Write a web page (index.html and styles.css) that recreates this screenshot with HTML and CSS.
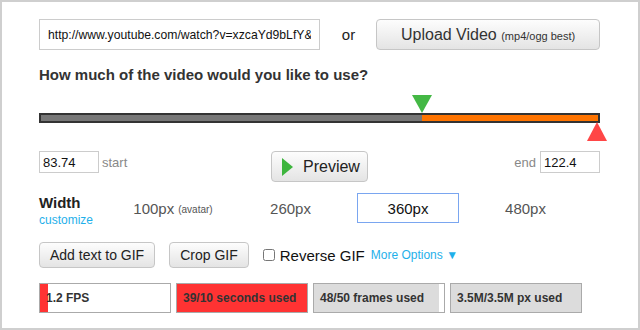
FILE: index.html
```html
<!DOCTYPE html>
<html>
<head>
<meta charset="utf-8">
<link rel="stylesheet" href="styles.css">
</head>
<body>
<div class="frame">
  <div class="source">
    <input class="url" type="text" value="http://www.youtube.com/watch?v=xzcaYd9bLfY&amp;list=PL">
    <span class="or">or</span>
    <button class="btn upload">Upload Video <small>(mp4/ogg best)</small></button>
  </div>

  <h2 class="question">How much of the video would you like to use?</h2>

  <div class="slider">
    <div class="track">
      <div class="played" style="width:381px"></div>
    </div>
    <span class="handle handle-start"></span>
    <span class="handle handle-end"></span>
  </div>

  <div class="range">
    <div class="range-start">
      <input class="num" type="text" value="83.74">
      <span class="muted muted-start">start</span>
    </div>
    <button class="btn preview">
      <svg class="play" width="11" height="18" viewBox="0 0 11 18"><polygon points="0,0 11,9 0,18" fill="#3db53d"/></svg>
      <span>Preview</span>
    </button>
    <div class="range-end">
      <span class="muted muted-end">end</span>
      <input class="num" type="text" value="122.4">
    </div>
  </div>

  <div class="widths">
    <div class="width-label">
      <span class="width-title">Width</span>
      <span class="customize">customize</span>
    </div>
    <div class="opt">100px<small>(avatar)</small></div>
    <div class="opt">260px</div>
    <div class="opt selected">360px</div>
    <div class="opt">480px</div>
  </div>

  <div class="actions">
    <button class="btn act">Add text to GIF</button>
    <button class="btn act">Crop GIF</button>
    <label class="reverse"><input type="checkbox" class="check">Reverse GIF</label>
    <span class="more">More Options ▼</span>
  </div>

  <div class="stats">
    <div class="stat stat-red" style="--p:6%">1.2 FPS</div>
    <div class="stat stat-red" style="--p:100%">39/10 seconds used</div>
    <div class="stat stat-gray" style="--p:96%">48/50 frames used</div>
    <div class="stat stat-gray" style="--p:100%">3.5M/3.5M px used</div>
  </div>
</div>
</body>
</html>
```

FILE: styles.css
```css
body {
  margin: 0;
  font-family: "Liberation Sans", Arial, sans-serif;
  background: #fff;
}

.frame {
  width: 640px;
  height: 330px;
  box-sizing: border-box;
  border: 2px solid #cfcfcf;
  padding: 17px 38px 0 37px;
}

.btn {
  box-sizing: border-box;
  margin: 0;
  padding: 0;
  border: 1px solid #c6c6c6;
  border-radius: 4px;
  background: linear-gradient(#fdfdfd, #e4e4e4);
  font-family: "Liberation Sans", Arial, sans-serif;
  color: #222;
  cursor: pointer;
}

/* row 1 */
.source {
  display: flex;
  align-items: center;
  height: 31px;
}

.url {
  width: 281px;
  height: 31px;
  box-sizing: border-box;
  margin: 0;
  border: 1px solid #cccccc;
  padding: 0 8px;
  font-family: "Liberation Sans", Arial, sans-serif;
  font-size: 12.2px;
  color: #111;
  outline: none;
}

.or {
  margin: 0 21px 0 22px;
  font-size: 15px;
  color: #222;
}

.upload {
  width: 224px;
  height: 31px;
  font-size: 16px;
  color: #333;
}

.upload small {
  font-size: 11px;
}

/* heading */
.question {
  margin: 16px 0 0;
  font-size: 15px;
  line-height: 18px;
  font-weight: bold;
  color: #333;
}

/* slider */
.slider {
  position: relative;
  height: 46px;
  box-sizing: border-box;
  padding-top: 18px;
  margin-top: 11px;
}

.track {
  display: flex;
  height: 10px;
  box-sizing: border-box;
  border: 2px solid #333;
  background: #ff7400;
}

.played {
  height: 100%;
  background: #777;
}

.handle {
  position: absolute;
  width: 0;
  height: 0;
  border-left: 10px solid transparent;
  border-right: 10px solid transparent;
}

.handle-start {
  top: 0;
  left: 373px;
  border-top: 18px solid #44b845;
}

.handle-end {
  top: 27px;
  left: 548px;
  border-bottom: 19px solid #ff4646;
}

/* range row */
.range {
  display: grid;
  grid-template-columns: 1fr auto 1fr;
  align-items: start;
  margin-top: 10px;
  height: 31px;
}

.range-start,
.range-end {
  display: flex;
  align-items: center;
  height: 22px;
}

.range-end {
  justify-self: end;
}

.num {
  width: 60px;
  height: 22px;
  box-sizing: border-box;
  margin: 0;
  border: 1px solid #cccccc;
  padding: 0 3px;
  font-family: "Liberation Sans", Arial, sans-serif;
  font-size: 13px;
  color: #111;
  outline: none;
}

.muted {
  font-size: 13px;
  color: #888;
}

.muted-start {
  margin-left: 3px;
}

.muted-end {
  margin-right: 4px;
}

.preview {
  display: flex;
  align-items: center;
  gap: 10px;
  width: 97px;
  height: 31px;
  padding-left: 10px;
  font-size: 16px;
  color: #222;
}

.play {
  display: block;
}

/* widths */
.widths {
  display: flex;
  margin-top: 11px;
  height: 34px;
}

.width-label {
  width: 83px;
  padding-top: 1px;
}

.width-title {
  display: block;
  font-size: 15px;
  line-height: 17px;
  font-weight: bold;
  color: #222;
}

.customize {
  display: block;
  margin-top: 2px;
  font-size: 12px;
  line-height: 14px;
  color: #1fb0ea;
}

.opt {
  width: 102px;
  height: 30px;
  box-sizing: border-box;
  margin-right: 15.5px;
  display: flex;
  align-items: center;
  justify-content: center;
  font-size: 15px;
  color: #555;
}

.opt small {
  font-size: 10px;
  margin-left: 4px;
  margin-top: 2px;
}

.opt.selected {
  border: 1px solid #7aa6f0;
  color: #111;
}

/* actions */
.actions {
  display: flex;
  align-items: center;
  margin-top: 15px;
  height: 26px;
}

.act {
  height: 26px;
  padding: 0 10px;
  font-size: 14px;
  margin-right: 14px;
  color: #222;
}

.reverse {
  display: flex;
  align-items: center;
  font-size: 15px;
  color: #111;
}

.check {
  width: 12px;
  height: 12px;
  margin: 0 5px 0 0;
}

.more {
  margin-left: 6px;
  font-size: 12px;
  color: #1fb0ea;
}

/* stats */
.stats {
  display: flex;
  gap: 5px;
  margin-top: 15px;
}

.stat {
  width: 132px;
  height: 30px;
  box-sizing: border-box;
  border: 1px solid #aaa;
  padding-left: 6px;
  font-size: 12px;
  line-height: 28px;
  font-weight: bold;
  color: #333;
}

.stat-red {
  background: linear-gradient(to right, #ff3333 var(--p), #fff var(--p));
}

.stat-gray {
  background: linear-gradient(to right, #dcdcdc var(--p), #fff var(--p));
}
```
